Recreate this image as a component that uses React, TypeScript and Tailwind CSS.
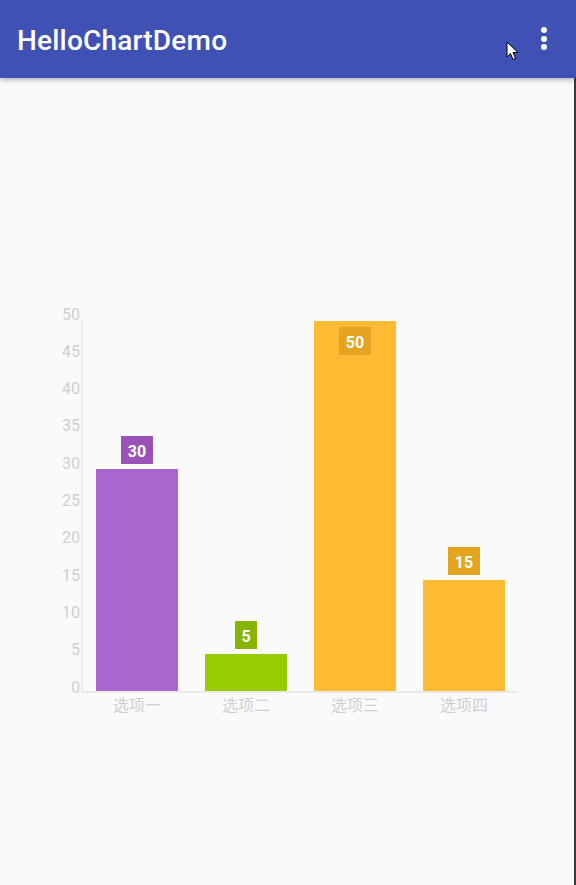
import React from 'react';

interface BarItem {
  label: string;
  value: number;
  color: string;
  labelColor: string;
}

const bars: BarItem[] = [
  { label: '选项一', value: 30, color: '#AA66CC', labelColor: '#9A52B8' },
  { label: '选项二', value: 5, color: '#99CC00', labelColor: '#88B400' },
  { label: '选项三', value: 50, color: '#FFBB33', labelColor: '#E5A420' },
  { label: '选项四', value: 15, color: '#FFBB33', labelColor: '#E5A420' },
];

// chart geometry (svg coords, svg top = page y 300)
const baseY = 391;
const unit = 7.4;
const axisX = 82;
const colStart = 96;
const colStep = 109;
const barW = 82;

const Chart: React.FC = () => {
  const ticks = [0, 5, 10, 15, 20, 25, 30, 35, 40, 45, 50];
  return (
    <svg width={576} height={430} className="block" style={{ fontFamily: 'Roboto, "Noto Sans CJK SC", sans-serif' }}>
      {ticks.map((t) => (
        <text
          key={t}
          x={80}
          y={387 - t * 7.46}
          textAnchor="end"
          dominantBaseline="central"
          fontSize={16}
          fill="#CFCFCF"
        >
          {t}
        </text>
      ))}
      <line x1={axisX} y1={21} x2={axisX} y2={392} stroke="#E4E4E4" strokeWidth={1.5} />
      <line x1={axisX} y1={392} x2={518} y2={392} stroke="#E4E4E4" strokeWidth={1.5} />
      {bars.map((b, i) => {
        const x = colStart + i * colStep;
        const h = b.value * unit;
        const top = baseY - h;
        const lw = b.value >= 10 ? 32 : 22;
        const cx = x + barW / 2;
        const inside = top - 33 < 20;
        const ly = inside ? top + 6 : top - 33;
        return (
          <g key={b.label}>
            <rect x={x} y={top} width={barW} height={h} fill={b.color} />
            <rect x={cx - lw / 2} y={ly} width={lw} height={28} fill={b.labelColor} />
            <text
              x={cx}
              y={ly + 15}
              textAnchor="middle"
              dominantBaseline="central"
              fontSize={16}
              fontWeight={700}
              fill="#FFFFFF"
            >
              {b.value}
            </text>
            <text
              x={cx}
              y={405}
              textAnchor="middle"
              dominantBaseline="central"
              fontSize={16}
              fill="#CFCFCF"
            >
              {b.label}
            </text>
          </g>
        );
      })}
    </svg>
  );
};

const Cursor: React.FC = () => (
  <svg width={14} height={22} viewBox="0 0 14 22" className="absolute left-[506px] top-[41px]">
    <path d="M1 1 L1 16 L4.5 12.5 L7 18.5 L9.5 17.5 L7 11.5 L12 11.5 Z" fill="#fff" stroke="#000" strokeWidth={1} strokeLinejoin="miter" />
  </svg>
);

const App: React.FC = () => {
  return (
    <div className="w-[576px] h-[885px] bg-[#FAFAFA] flex flex-col overflow-hidden" style={{ fontFamily: 'Roboto, "Noto Sans CJK SC", sans-serif' }}>
      <div className="relative h-[78px] bg-[#3F51B5] flex items-center justify-between pl-[17px] pr-[29px] shadow-[0_2px_5px_rgba(0,0,0,0.28)] z-10">
        <div className="text-white text-[28px] font-medium tracking-[0.2px] pt-[3px]">HelloChartDemo</div>
        <div className="flex flex-col gap-[2.5px] pb-[1px]">
          <span className="block w-[6px] h-[6px] rounded-full bg-white" />
          <span className="block w-[6px] h-[6px] rounded-full bg-white" />
          <span className="block w-[6px] h-[6px] rounded-full bg-white" />
        </div>
        <Cursor />
      </div>
      <div className="flex-1 border-r-2 border-[#3a3a3a]">
        <div className="mt-[222px]">
          <Chart />
        </div>
      </div>
    </div>
  );
};

export default App;
